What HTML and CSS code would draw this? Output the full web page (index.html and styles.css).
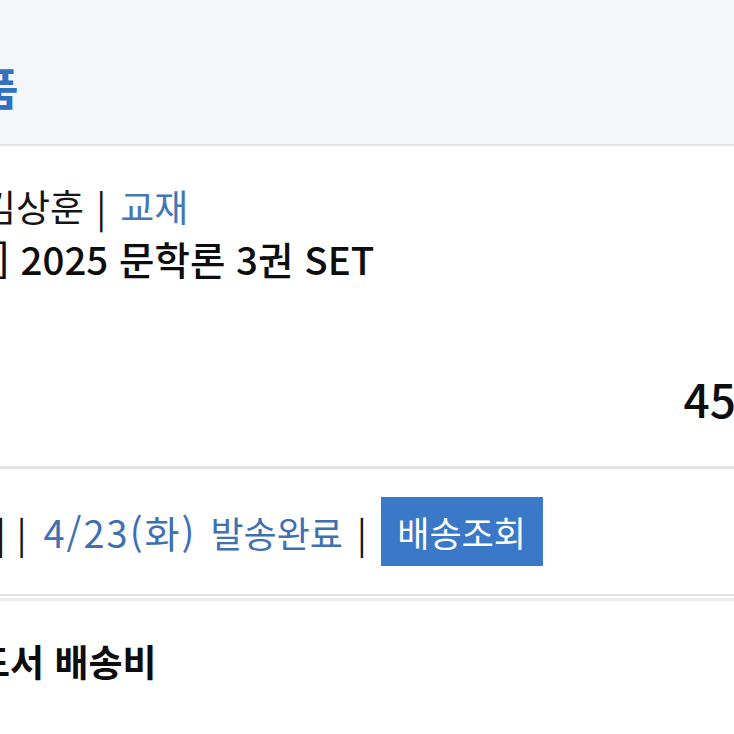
FILE: index.html
```html
<!DOCTYPE html>
<html lang="ko">
<head>
<meta charset="utf-8">
<link rel="stylesheet" href="styles.css">
</head>
<body>
<div class="page">
  <header class="head">
    <h1 class="head-title">품</h1>
  </header>
  <section class="item">
    <p class="item-meta"><span class="meta-name">김상훈</span><span class="meta-sep">|</span><span class="meta-cat">교재</span></p>
    <p class="item-name">] 2025 문학론 3권 SET</p>
    <div class="item-price"><span class="price">45</span></div>
  </section>
  <section class="ship">
    <span class="bar bar-first">|</span>
    <span class="bar">|</span>
    <span class="ship-date"><span class="ship-day">4/23(화)</span> 발송완료</span>
    <span class="bar">|</span>
    <button class="track-btn">배송조회</button>
  </section>
  <section class="fee">
    <h2 class="fee-title">도서 배송비</h2>
  </section>
</div>
</body>
</html>
```
FILE: styles.css
```css
html, body {
  margin: 0;
  padding: 0;
  background: #ffffff;
  overflow: hidden;
}
body {
  font-family: "Noto Sans CJK KR", "Noto Sans", sans-serif;
  color: #111111;
}
.page {
  width: 734px;
  height: 734px;
  display: flex;
  flex-direction: column;
}
.head {
  height: 144px;
  background: #f5f6f9;
  border-bottom: 2px solid #e1e2e5;
  box-sizing: content-box;
  flex: none;
}
.head-title {
  margin: 0 0 0 -22px;
  padding-top: 62px;
  font-size: 44px;
  line-height: 50px;
  font-weight: 700;
  color: #3270c2;
}
.item {
  height: 323px;
  flex: none;
  border-bottom: 3px solid #e4e4e6;
  padding-top: 34px;
  box-sizing: border-box;
  display: flex;
  flex-direction: column;
}
.item-meta {
  margin: 0 0 0 -18px;
  font-size: 37px;
  line-height: 52px;
  font-weight: 400;
  color: #151515;
  display: flex;
}
.meta-sep {
  margin: 0 14px 0 12px;
}
.meta-cat {
  color: #4476b8;
}
.item-name {
  margin: 0 0 0 -4px;
  font-size: 38.5px;
  line-height: 52px;
  font-weight: 500;
  color: #0d0d0d;
}
.item-price {
  margin-top: 88px;
  display: flex;
  justify-content: flex-end;
}
.price {
  font-size: 46px;
  line-height: 52px;
  font-weight: 500;
  color: #0d0d0d;
  margin-right: -2px;
}
.ship {
  height: 127px;
  flex: none;
  border-bottom: 2px solid #e2e2e4;
  box-sizing: border-box;
  display: flex;
  align-items: center;
  font-size: 36px;
}
.bar {
  color: #111111;
  font-weight: 400;
  margin-right: 11px;
}
.bar-first {
  margin-left: -4px;
}
.ship-date {
  color: #3f70b1;
  margin-right: 14px;
  margin-left: 6px;
  word-spacing: 4px;
}
.ship-day {
  font-size: 38px;
  letter-spacing: 2px;
}
.track-btn {
  margin-left: 3px;
  height: 69px;
  width: 162px;
  padding: 0;
  border: 0;
  background: #3a78c8;
  color: #ffffff;
  font-family: inherit;
  font-size: 35px;
  font-weight: 400;
  display: flex;
  align-items: center;
  justify-content: center;
}
.fee {
  margin-top: 2px;
  border-top: 3px solid #ebebed;
  flex: 1;
}
.fee-title {
  margin: 0 0 0 -24px;
  padding-top: 34px;
  font-size: 37px;
  line-height: 52px;
  font-weight: 700;
  color: #0d0d0d;
}
```
